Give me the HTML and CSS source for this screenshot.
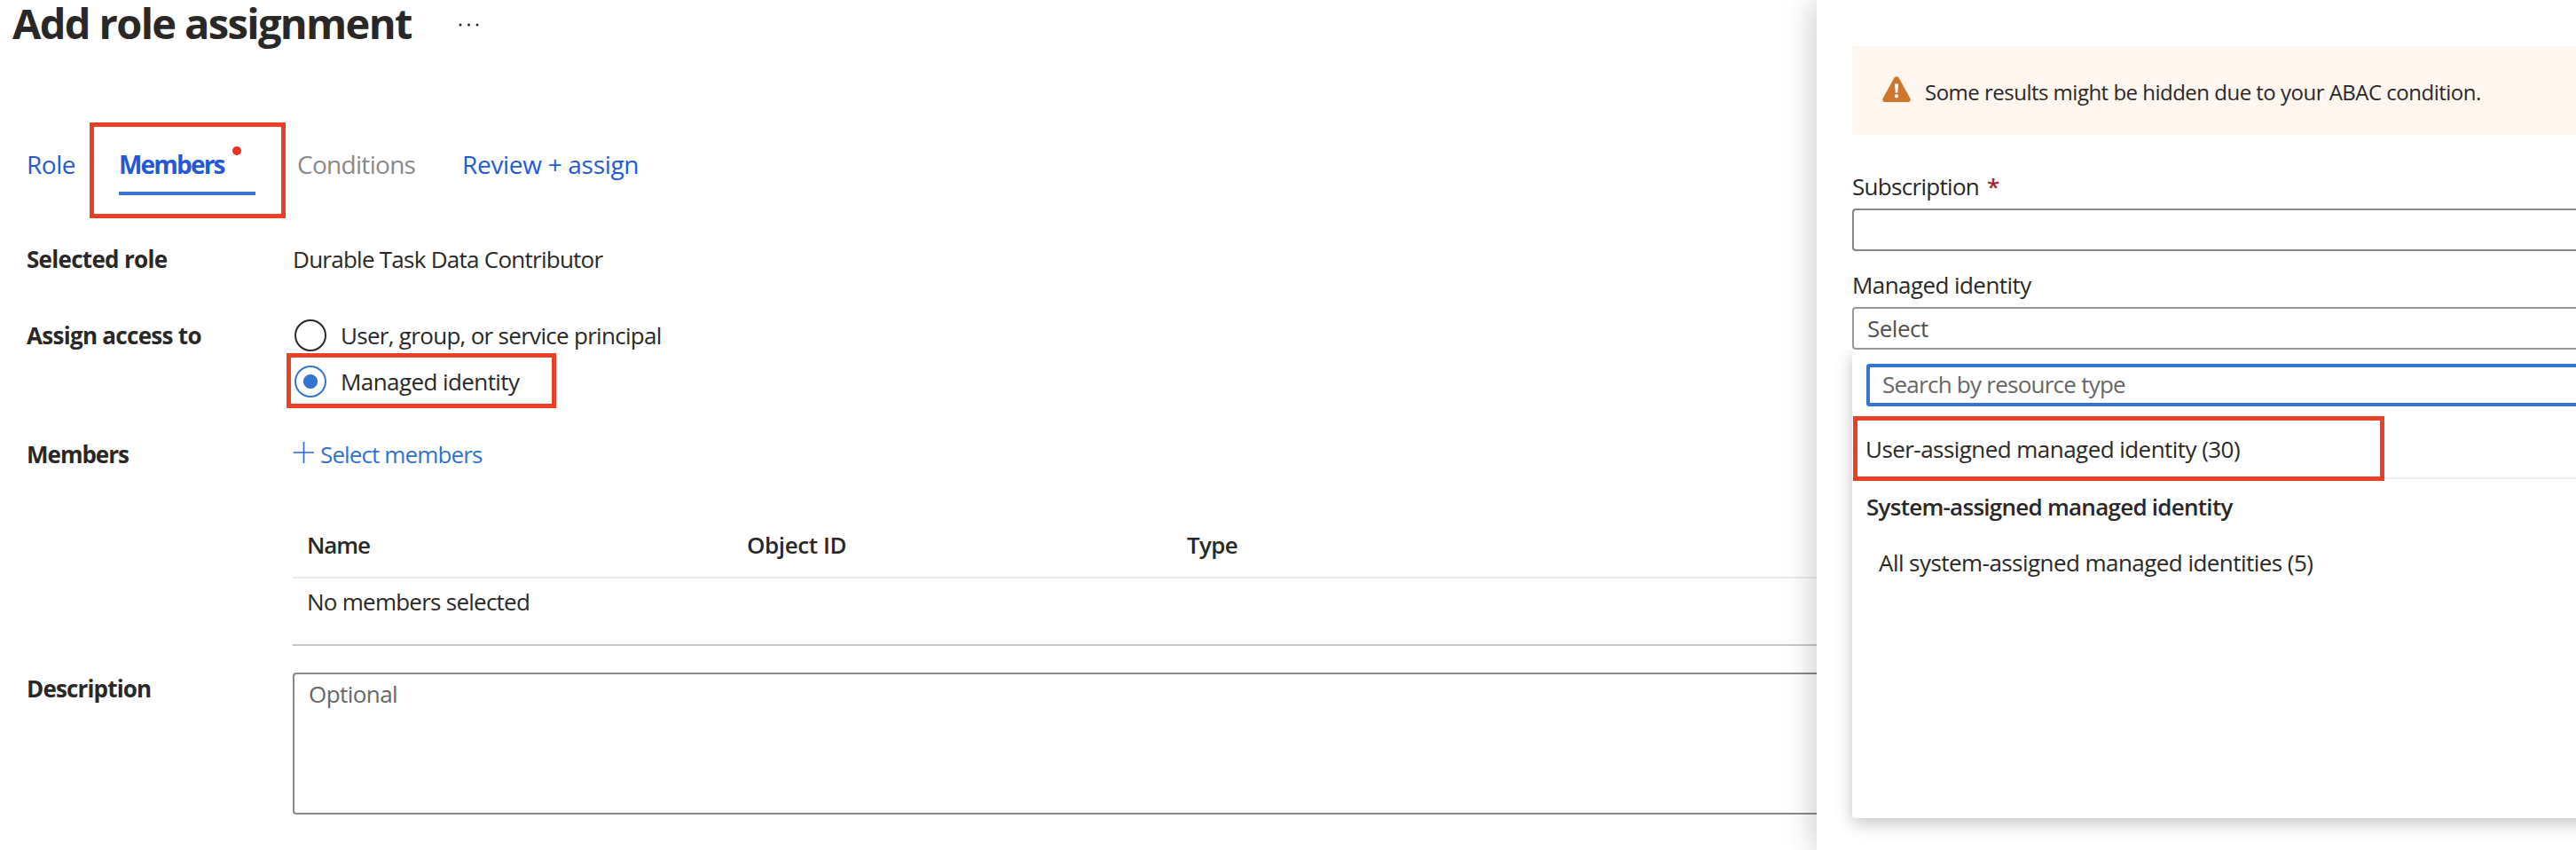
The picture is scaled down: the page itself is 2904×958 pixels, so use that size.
FILE: index.html
```html
<!DOCTYPE html>
<html lang="en">
<head>
<meta charset="utf-8">
<title>Add role assignment</title>
<link rel="stylesheet" href="styles.css">
</head>
<body>
<div class="app">
  <main class="page">
    <header class="page-header">
      <h1 class="title">Add role assignment</h1>
      <svg class="more" width="24" height="4" viewBox="0 0 24 4"><circle cx="2" cy="2" r="1.5"/><circle cx="11.500" cy="2" r="1.5"/><circle cx="21" cy="2" r="1.5"/></svg>
    </header>
    <nav class="tabs">
      <a class="tab tab-role">Role</a>
      <a class="tab tab-members">Members<i class="alert-dot"></i></a>
      <a class="tab tab-conditions">Conditions</a>
      <a class="tab tab-review">Review + assign</a>
    </nav>
    <section class="form">
      <div class="label">Selected role</div>
      <div class="role-value">Durable Task Data Contributor</div>

      <div class="label">Assign access to</div>
      <div class="radios">
        <label class="radio"><i class="ring"></i><span>User, group, or service principal</span></label>
        <label class="radio checked"><i class="ring"></i><span>Managed identity</span></label>
      </div>

      <div class="label label-members">Members</div>
      <a class="select-link"><svg width="24" height="24" viewBox="0 0 24 24"><path d="M12.500 0v24M0.500 12h24"/></svg><span>Select members</span></a>

      <div class="table">
        <div class="thead"><span class="col-name">Name</span><span class="col-id">Object ID</span><span>Type</span></div>
        <div class="empty">No members selected</div>
      </div>

      <div class="label label-description">Description</div>
      <div class="textarea">Optional</div>
    </section>
  </main>
  <aside class="panel">
    <div class="banner">
      <svg width="32" height="30" viewBox="0 0 32 30"><path class="tri" d="M13.500 1.500Q16-1 18.500 1.500L31.500 25Q32.500 29 29 29H3Q-.5 29 .5 25Z"/><path class="bang" d="M14 8.500h4l-.7 10h-2.600Z"/><circle class="bang" cx="16" cy="22.300" r="2.100"/></svg>
      <span>Some results might be hidden due to your ABAC condition.</span>
    </div>
    <div class="field-label">Subscription<span class="required">*</span></div>
    <div class="input"></div>
    <div class="field-label identity-label">Managed identity</div>
    <div class="input select">Select</div>
    <div class="dropdown">
      <div class="search">Search by resource type</div>
      <div class="option user-assigned">User-assigned managed identity (30)</div>
      <div class="option group">System-assigned managed identity</div>
      <div class="option child">All system-assigned managed identities (5)</div>
    </div>
  </aside>
  <div class="highlight highlight-tab"></div>
  <div class="highlight highlight-radio"></div>
  <div class="highlight highlight-option"></div>
</div>
</body>
</html>
```
FILE: styles.css
```css
* { box-sizing: border-box; }

body {
  margin: 0;
  background: #fff;
  color: #292827;
  font: 26px/36px "Open Sans", "Noto Sans", sans-serif;
  letter-spacing: -0.7px;
  white-space: nowrap;
}

.app { position: relative; display: flex; width: 2904px; height: 958px; overflow: hidden; }
.page { flex: none; width: 2048px; height: 958px; }

/* Header */
.page-header { display: flex; height: 100px; padding-left: 14px; }
.title { margin: -7px 0 0; width: 503px; font-size: 47px; line-height: 66px; font-weight: 700; letter-spacing: -1.65px; }
.more { margin-top: 26px; fill: #292827; }

/* Tabs */
.tabs { display: flex; height: 174px; padding: 66px 0 0 30px; font-size: 28px; line-height: 38px; color: #2459d6; }
.tab { display: block; height: 54px; }
.tab-role { width: 104px; letter-spacing: -0.5px; }
.tab-members { position: relative; width: 154px; font-weight: 700; letter-spacing: -1.8px; border-bottom: 4px solid #3276d1; }
.alert-dot { position: absolute; left: 128px; top: -1px; width: 10px; height: 10px; border-radius: 50%; background: #ee3124; }
.tab-conditions { width: 186px; padding-left: 47px; color: #8a8886; }
.tab-review { padding-left: 47px; letter-spacing: -0.3px; }

/* Form */
.form {
  display: grid;
  grid-template-columns: 300px 1718px;
  grid-template-rows: 86px 134px 102px 162px 160px;
  padding-left: 30px;
}
.label { font-weight: 700; }
.label-members { letter-spacing: -1px; }
.label-description { letter-spacing: -0.84px; }
.role-value { letter-spacing: -0.74px; }
.radios { display: flex; flex-direction: column; gap: 16px; padding-left: 2px; }
.radio { display: flex; gap: 16px; height: 36px; }
.checked { letter-spacing: -0.58px; }
.ring { width: 36px; height: 36px; border: 2px solid #292827; border-radius: 50%; }
.checked .ring { border-color: #3276d1; background: radial-gradient(circle, #3276d1 7.5px, transparent 8.5px); }
.select-link { display: flex; gap: 7px; color: #2f72d3; letter-spacing: -0.88px; }
.select-link svg { margin-top: 4px; fill: none; stroke: #2f66da; stroke-width: 1.6; }

/* Members table */
.table { grid-column: 2; height: 132px; border-bottom: 2px solid #c8c8c8; }
.thead {
  display: grid;
  grid-template-columns: 496px 496px 1fr;
  height: 56px;
  padding-left: 16px;
  border-bottom: 2px solid #e9e9e9;
  font-weight: 600;
}
.col-name { letter-spacing: -1.1px; }
.col-id { letter-spacing: -0.4px; }
.empty { padding: 8px 0 0 16px; letter-spacing: -0.75px; }
.textarea { height: 160px; padding: 4px 16px; border: 2px solid #898989; border-right: 0; border-radius: 4px 0 0 4px; color: #666; letter-spacing: -0.57px; }

/* Side panel */
.panel { position: relative; flex: none; width: 856px; height: 958px; padding: 52px 0 0 40px; background: #fff; box-shadow: 0 0 36px rgba(0, 0, 0, 0.24); }
.banner {
  display: flex;
  gap: 16px;
  height: 100px;
  padding: 34px 0 0 34px;
  background: #fff6f0;
  border-radius: 4px 0 0 4px;
  font-size: 24px;
  letter-spacing: -0.51px;
}
.tri { fill: #cc772c; }
.bang { fill: #fff; }
.field-label { display: flex; gap: 9px; height: 43px; margin-top: 40px; }
.required { color: #a4262c; font-weight: 600; }
.input { height: 48px; border: 2px solid #868686; border-right: 0; border-radius: 4px 0 0 4px; }
.identity-label { margin-top: 20px; letter-spacing: -0.57px; }
.select { padding: 4px 15px; border-color: #999; color: #505050; letter-spacing: -0.5px; }

/* Dropdown */
.dropdown { height: 528px; margin-right: -40px; padding-top: 16px; border-radius: 0 0 0 4px; background: #fff; box-shadow: 0 6px 20px rgba(0, 0, 0, 0.24); clip-path: inset(0 0 -40px -40px); }
.search { height: 48px; margin-left: 16px; padding: 1px 14px; border: 4px solid #3276d1; border-right: 0; border-radius: 4px 0 0 4px; color: #666; letter-spacing: -0.75px; }
.option { padding-left: 15px; letter-spacing: -0.55px; }
.user-assigned { height: 82px; padding-top: 30px; border-bottom: 2px solid #eee; }
.group { height: 63px; padding: 13px 0 0 16px; font-weight: 600; letter-spacing: -0.74px; }
.child { padding: 13px 0 0 30px; }

/* Callout boxes */
.highlight { position: absolute; border: 5px solid #ea4025; }
.highlight-tab { left: 101px; top: 138px; width: 221px; height: 108px; }
.highlight-radio { left: 323px; top: 398px; width: 304px; height: 62px; }
.highlight-option { left: 2089px; top: 469px; width: 599px; height: 73px; }
```
